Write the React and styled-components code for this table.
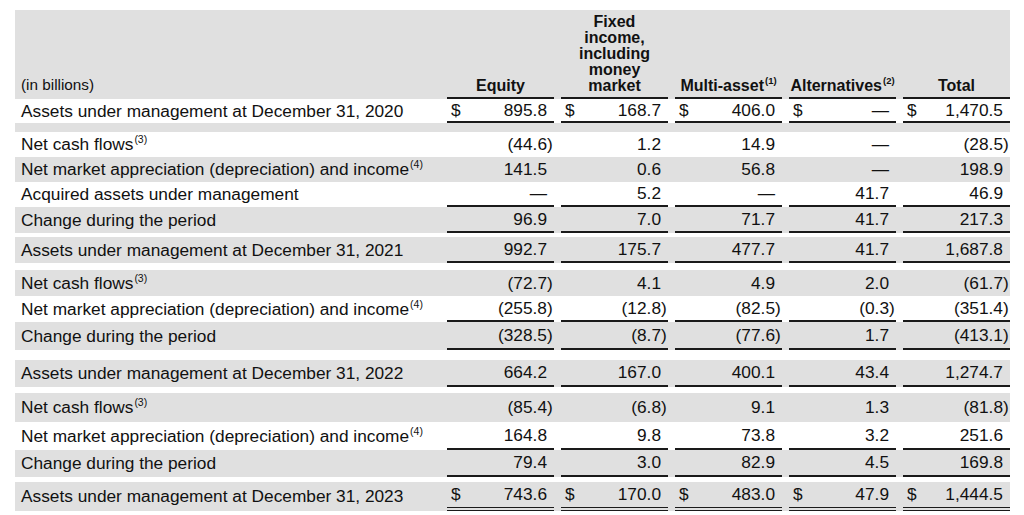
import React from 'react';
import styled, { createGlobalStyle } from 'styled-components';

const GRAY = '#e0e0e0';

const GlobalStyle = createGlobalStyle`
  body {
    margin: 0;
    background: #ffffff;
    font-family: "Liberation Sans", Arial, sans-serif;
    color: #111;
  }
`;

// Layout
const Page = styled.div`
  padding: 10px 14px 0 15px;
  width: 995px;
`;

const Row = styled.div`
  display: grid;
  grid-template-columns: 425px repeat(5, 114px);
  height: ${(p) => p.h}px;
  background: ${(p) => (p.shade ? GRAY : '#ffffff')};
`;

const Label = styled.div`
  display: flex;
  align-items: ${(p) => (p.bottom ? 'flex-end' : 'center')};
  padding-left: 6px;
  padding-bottom: ${(p) => (p.bottom ? '5px' : '0')};
  font-size: ${(p) => (p.small ? '15.3px' : '17.3px')};
  white-space: nowrap;
`;

const Cell = styled.div`
  padding-left: 7px;
  display: flex;
`;

const lines = {
  none: '0',
  single: '2px solid #1a1a1a',
  double: '4px double #1a1a1a',
};

const Inner = styled.div`
  flex: 1;
  display: flex;
  align-items: center;
  font-size: 17.3px;
  border-bottom: ${(p) => lines[p.line || 'none']};
`;

const HeadInner = styled.div`
  flex: 1;
  display: flex;
  align-items: flex-end;
  justify-content: center;
  text-align: center;
  font-weight: bold;
  font-size: 16px;
  line-height: 16px;
  padding-bottom: 3px;
  border-bottom: 2px solid #1a1a1a;
  white-space: nowrap;
`;

const Dollar = styled.span`
  padding-left: 4px;
`;

const Value = styled.span`
  margin-left: auto;
`;

const Paren = styled.span`
  width: 7px;
  text-align: left;
`;

const Sup = styled.sup`
  font-size: ${(p) => (p.head ? '9.5px' : '10.5px')};
  line-height: 0;
  vertical-align: ${(p) => (p.head ? '7px' : '7px')};
  margin-left: 1px;
`;

const Spacer = styled.div`
  height: ${(p) => p.h}px;
  background: ${(p) => (p.shade ? GRAY : '#ffffff')};
`;

const rows = [
  { label: 'Assets under management at December 31, 2020', vals: ['895.8', '168.7', '406.0', '—', '1,470.5'], h: 24, dollar: true, line: 'single' },
  { spacer: true, h: 9, shade: true },
  { label: 'Net cash flows', sup: '(3)', vals: ['(44.6)', '1.2', '14.9', '—', '(28.5)'], h: 25 },
  { label: 'Net market appreciation (depreciation) and income', sup: '(4)', vals: ['141.5', '0.6', '56.8', '—', '198.9'], h: 25, shade: true },
  { label: 'Acquired assets under management', vals: ['—', '5.2', '—', '41.7', '46.9'], h: 25, line: 'single' },
  { label: 'Change during the period', vals: ['96.9', '7.0', '71.7', '41.7', '217.3'], h: 26, shade: true, line: 'single' },
  { spacer: true, h: 4 },
  { label: 'Assets under management at December 31, 2021', vals: ['992.7', '175.7', '477.7', '41.7', '1,687.8'], h: 26, shade: true, line: 'single' },
  { spacer: true, h: 7 },
  { label: 'Net cash flows', sup: '(3)', vals: ['(72.7)', '4.1', '4.9', '2.0', '(61.7)'], h: 26, shade: true },
  { label: 'Net market appreciation (depreciation) and income', sup: '(4)', vals: ['(255.8)', '(12.8)', '(82.5)', '(0.3)', '(351.4)'], h: 26, line: 'single' },
  { label: 'Change during the period', vals: ['(328.5)', '(8.7)', '(77.6)', '1.7', '(413.1)'], h: 28, shade: true, line: 'single' },
  { spacer: true, h: 10 },
  { label: 'Assets under management at December 31, 2022', vals: ['664.2', '167.0', '400.1', '43.4', '1,274.7'], h: 27, shade: true, line: 'single' },
  { spacer: true, h: 6 },
  { label: 'Net cash flows', sup: '(3)', vals: ['(85.4)', '(6.8)', '9.1', '1.3', '(81.8)'], h: 29, shade: true },
  { label: 'Net market appreciation (depreciation) and income', sup: '(4)', vals: ['164.8', '9.8', '73.8', '3.2', '251.6'], h: 28, line: 'single' },
  { label: 'Change during the period', vals: ['79.4', '3.0', '82.9', '4.5', '169.8'], h: 27, shade: true, line: 'single' },
  { spacer: true, h: 5 },
  { label: 'Assets under management at December 31, 2023', vals: ['743.6', '170.0', '483.0', '47.9', '1,444.5'], h: 29, shade: true, dollar: true, line: 'double' },
];

const Amount = ({ v, dollar, line }) => {
  const neg = v.startsWith('(');
  return (
    <Cell>
      <Inner line={line}>
        {dollar && <Dollar>$</Dollar>}
        <Value>{neg ? v.slice(0, -1) : v}</Value>
        <Paren>{neg ? ')' : ''}</Paren>
      </Inner>
    </Cell>
  );
};

const App = () => (
  <Page>
    <GlobalStyle />
    <Row h={89} shade>
      <Label bottom small>(in billions)</Label>
      <Cell><HeadInner>Equity</HeadInner></Cell>
      <Cell>
        <HeadInner>Fixed<br />income,<br />including<br />money<br />market</HeadInner>
      </Cell>
      <Cell><HeadInner><span>Multi-asset<Sup head>(1)</Sup></span></HeadInner></Cell>
      <Cell><HeadInner><span>Alternatives<Sup head>(2)</Sup></span></HeadInner></Cell>
      <Cell><HeadInner>Total</HeadInner></Cell>
    </Row>
    {rows.map((r, i) =>
      r.spacer ? (
        <Spacer key={i} h={r.h} shade={r.shade} />
      ) : (
        <Row key={i} h={r.h} shade={r.shade}>
          <Label>
            <span>
              {r.label}
              {r.sup && <Sup>{r.sup}</Sup>}
            </span>
          </Label>
          {r.vals.map((v, j) => (
            <Amount key={j} v={v} dollar={r.dollar} line={r.line} />
          ))}
        </Row>
      )
    )}
  </Page>
);

export default App;
